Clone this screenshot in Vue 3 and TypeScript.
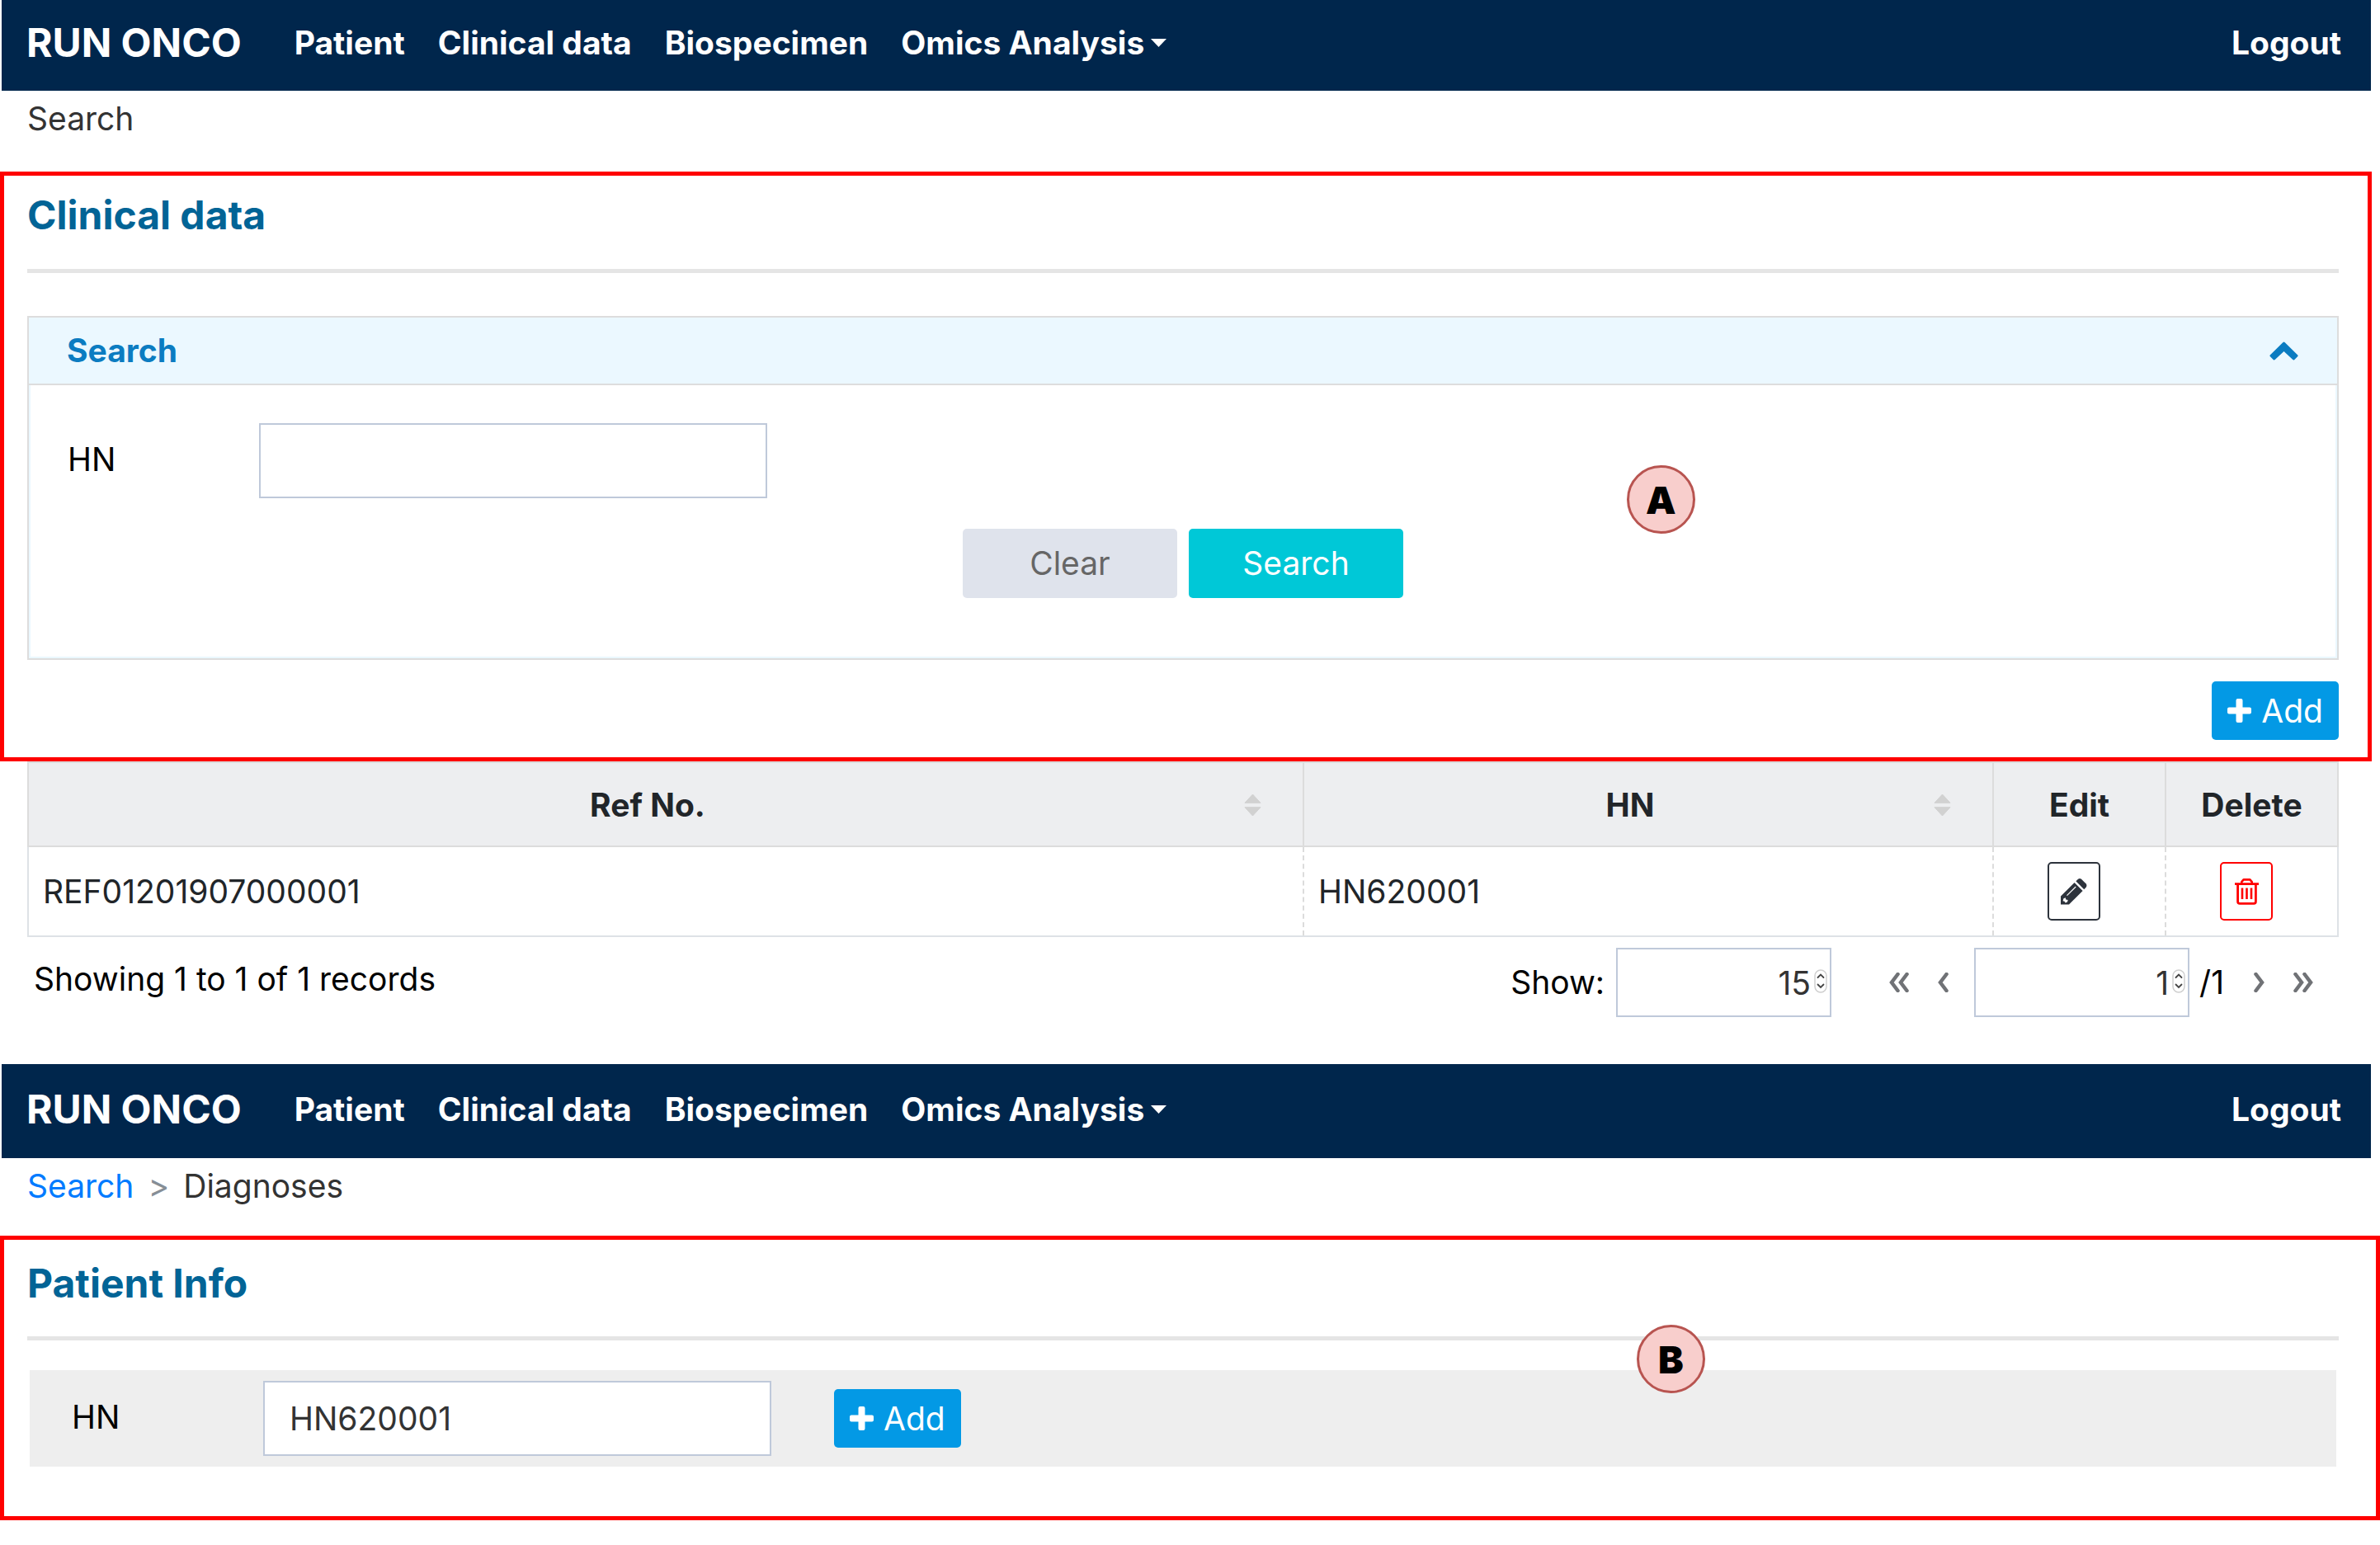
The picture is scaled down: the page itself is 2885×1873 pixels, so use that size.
<script setup lang="ts">
import { ref } from 'vue'

interface RecordRow {
  refNo: string
  hn: string
}

const navItems: string[] = ['Patient', 'Clinical data', 'Biospecimen']
const rows: RecordRow[] = [{ refNo: 'REF01201907000001', hn: 'HN620001' }]

const searchHn = ref('')
const patientHn = ref('HN620001')
const pageSize = ref('15')
const pageNo = ref('1')
</script>

<template>
  <main class="page">
    <nav class="navbar">
      <a class="brand" href="#">RUN ONCO</a>
      <a v-for="item in navItems" :key="item" class="nav-link" href="#">{{ item }}</a>
      <button class="nav-link nav-menu" type="button">
        Omics Analysis
        <svg width="19" height="10" viewBox="0 0 19 10"><path d="M0 0H19L9.5 10Z" fill="#fff" /></svg>
      </button>
      <a class="nav-link logout" href="#">Logout</a>
    </nav>
    <div class="breadcrumb"><span>Search</span></div>

    <section class="region region-search">
      <h1 class="title">Clinical data</h1>
      <hr class="rule" />
      <form class="panel" @submit.prevent>
        <header class="panel-head">
          <h2>Search</h2>
          <button class="icon-button" type="button" aria-label="Collapse">
            <svg width="35" height="23" viewBox="0 0 35 23">
              <path d="M17.5 2L33 17.2L29.3 21L17.5 9.9L5.7 21L2 17.2Z" fill="#0b7cc1" stroke="#0b7cc1" stroke-width="3" stroke-linejoin="round" />
            </svg>
          </button>
        </header>
        <div class="panel-body">
          <div class="field">
            <label for="search-hn">HN</label>
            <input id="search-hn" v-model="searchHn" class="text-input" type="text" />
          </div>
          <div class="actions">
            <button class="action clear" type="reset">Clear</button>
            <button class="action search" type="submit">Search</button>
          </div>
        </div>
      </form>
      <div class="add-row">
        <button class="add" type="button">
          <svg width="29" height="29" viewBox="0 0 29 29">
            <path d="M12.5 2H16.5V12.5H27V16.5H16.5V27H12.5V16.5H2V12.5H12.5Z" fill="#fff" stroke="#fff" stroke-width="4" stroke-linejoin="round" />
          </svg>
          Add
        </button>
      </div>
      <span class="marker marker-a">A</span>
    </section>

    <table class="records">
      <colgroup>
        <col />
        <col class="col-hn" />
        <col class="col-tool" />
        <col class="col-tool" />
      </colgroup>
      <thead>
        <tr>
          <th v-for="head in ['Ref No.', 'HN']" :key="head" scope="col">
            <div class="sortable">
              <span>{{ head }}</span>
              <svg width="21" height="28" viewBox="0 0 21 28">
                <path d="M10.5 1L20 11.3H1ZM10.5 27L20 16.7H1Z" fill="#d1d1d1" stroke="#d1d1d1" stroke-linejoin="round" />
              </svg>
            </div>
          </th>
          <th scope="col">Edit</th>
          <th scope="col">Delete</th>
        </tr>
      </thead>
      <tbody>
        <tr v-for="row in rows" :key="row.refNo">
          <td>{{ row.refNo }}</td>
          <td>{{ row.hn }}</td>
          <td class="tool">
            <button class="square edit" type="button" aria-label="Edit">
              <svg width="32" height="32" viewBox="0 0 32 32">
                <path d="M0 31.5V21.5L16.6 5L26.6 15L10 31.5Z" fill="#2d333c" />
                <path d="M18.4 3.3L21 .8Q23 -.6 25 .8L30.8 6.6Q32 8.4 30.8 10.4L28.3 13.2Z" fill="#2d333c" />
                <path d="M7.5 20.6L18.2 10" stroke="#fff" stroke-width="1.2" />
                <path d="M3.4 24.2L5.8 23.2L6.2 25.4L8.7 26L8 28.6L5.6 29.6L4.6 27.8L2.6 27.2Z" fill="#fff" />
              </svg>
            </button>
          </td>
          <td class="tool">
            <button class="square delete" type="button" aria-label="Delete">
              <svg width="29" height="32" viewBox="0 0 29 32" fill="none" stroke="#f00">
                <path d="M0 6.6H29" stroke-width="2.8" />
                <path d="M8.3 6V4.2L10.6 1.4H18.4L20.7 4.2V6" stroke-width="2.6" stroke-linejoin="round" />
                <path d="M3.6 7V28Q3.6 30.4 6 30.4H23Q25.4 30.4 25.4 28V7" stroke-width="2.8" />
                <path d="M9 11.5V25M14.5 11.5V25M20 11.5V25" stroke-width="2.6" />
              </svg>
            </button>
          </td>
        </tr>
      </tbody>
    </table>

    <div class="pager">
      <p class="summary">Showing 1 to 1 of 1 records</p>
      <label for="page-size">Show:</label>
      <div class="number">
        <input id="page-size" v-model="pageSize" type="text" inputmode="numeric" />
        <svg class="spinner" width="16" height="30" viewBox="0 0 16 30" fill="none">
          <rect x="1" y="1" width="14" height="27" rx="7" fill="#fff" stroke="#cfcfcf" stroke-width="1.5" />
          <path d="M4.5 10L8 6.6L11.5 10M4.5 18.5L8 22L11.5 18.5" stroke="#444" stroke-width="1.8" />
        </svg>
      </div>
      <button class="icon-button first" type="button" aria-label="First page">
        <svg width="24" height="24" viewBox="0 0 24 24"><path d="M10.5 2L3 12L10.5 22M21.5 2L14 12L21.5 22" /></svg>
      </button>
      <button class="icon-button prev" type="button" aria-label="Previous page">
        <svg width="13" height="24" viewBox="0 0 13 24"><path d="M10.5 2L3 12L10.5 22" /></svg>
      </button>
      <div class="number">
        <input id="page-no" v-model="pageNo" type="text" inputmode="numeric" aria-label="Page" />
        <svg class="spinner" width="16" height="30" viewBox="0 0 16 30" fill="none">
          <rect x="1" y="1" width="14" height="27" rx="7" fill="#fff" stroke="#cfcfcf" stroke-width="1.5" />
          <path d="M4.5 10L8 6.6L11.5 10M4.5 18.5L8 22L11.5 18.5" stroke="#444" stroke-width="1.8" />
        </svg>
      </div>
      <span class="total">/1</span>
      <button class="icon-button next" type="button" aria-label="Next page">
        <svg width="13" height="24" viewBox="0 0 13 24"><path d="M2.5 2L10 12L2.5 22" /></svg>
      </button>
      <button class="icon-button last" type="button" aria-label="Last page">
        <svg width="24" height="24" viewBox="0 0 24 24"><path d="M2.5 2L10 12L2.5 22M13.5 2L21 12L13.5 22" /></svg>
      </button>
    </div>

    <nav class="navbar navbar-second">
      <a class="brand" href="#">RUN ONCO</a>
      <a v-for="item in navItems" :key="item" class="nav-link" href="#">{{ item }}</a>
      <button class="nav-link nav-menu" type="button">
        Omics Analysis
        <svg width="19" height="10" viewBox="0 0 19 10"><path d="M0 0H19L9.5 10Z" fill="#fff" /></svg>
      </button>
      <a class="nav-link logout" href="#">Logout</a>
    </nav>
    <div class="breadcrumb breadcrumb-second">
      <a href="#">Search</a><span class="sep">&gt;</span><span>Diagnoses</span>
    </div>

    <section class="region region-patient">
      <h1 class="title">Patient Info</h1>
      <hr class="rule" />
      <div class="field patient-row">
        <label for="patient-hn">HN</label>
        <input id="patient-hn" v-model="patientHn" class="text-input" type="text" />
        <button class="add" type="button">
          <svg width="29" height="29" viewBox="0 0 29 29">
            <path d="M12.5 2H16.5V12.5H27V16.5H16.5V27H12.5V16.5H2V12.5H12.5Z" fill="#fff" stroke="#fff" stroke-width="4" stroke-linejoin="round" />
          </svg>
          Add
        </button>
      </div>
      <span class="marker marker-b">B</span>
    </section>
  </main>
</template>

<style>
body {
  background: #fff;
}
</style>

<style scoped>
.page,
.page * {
  box-sizing: border-box;
}
.page {
  font-family: Inter, "Liberation Sans", sans-serif;
  font-size: 39px;
  line-height: 46px;
  color: #000;
  padding-bottom: 30px;
}
button,
input {
  font: inherit;
  margin: 0;
}
button {
  cursor: pointer;
}
a {
  text-decoration: none;
}

.navbar {
  display: flex;
  align-items: center;
  gap: 40px;
  height: 110px;
  margin: 0 11px 0 2px;
  padding: 0 36px 6px 30px;
  background: #00264c;
}
.navbar-second {
  height: 114px;
  padding-bottom: 4px;
}
.brand {
  margin-right: 24px;
  font-size: 48px;
  font-weight: 700;
  color: #fff;
  white-space: nowrap;
}
.nav-link {
  padding: 0;
  border: 0;
  background: none;
  font-weight: 700;
  color: #fff;
  white-space: nowrap;
}
.nav-menu {
  display: flex;
  align-items: center;
  gap: 8px;
}
.logout {
  margin-left: auto;
}

.breadcrumb {
  padding: 11px 33px 41px;
  color: #333;
}
.breadcrumb-second {
  padding-bottom: 37px;
}
.breadcrumb a {
  color: #007bff;
}
.sep {
  margin: 0 17px;
  color: #868e96;
}

.region {
  position: relative;
  border: 5px solid #f00;
}
.region-search {
  margin-right: 10px;
  padding: 19px 35px 21px 28px;
}
.region-patient {
  padding: 24px 45px 60px 28px;
}
.title {
  margin: 0;
  font-size: 48px;
  line-height: 58px;
  font-weight: 700;
  color: #026496;
}
.rule {
  height: 5px;
  margin: 36px 0 0;
  border: 0;
  background: #e5e5e5;
}

.panel {
  margin-top: 52px;
  border: 2px solid #ddd;
}
.panel-head {
  display: flex;
  align-items: center;
  justify-content: space-between;
  height: 82px;
  padding: 0 47px 0 46px;
  border-bottom: 2px solid #ddd;
  background: #ebf8ff;
}
.panel-head h2 {
  margin: 0;
  font-size: 39px;
  font-weight: 700;
  color: #0b7cc1;
}
.icon-button {
  display: flex;
  padding: 0;
  border: 0;
  background: none;
}
.panel-body {
  padding: 46px 45px 71px;
  border: 2px solid #ebf8ff;
  border-top: 0;
}
.field {
  display: flex;
  align-items: center;
}
.field label {
  width: 232px;
  padding-bottom: 3px;
}
.text-input {
  width: 616px;
  height: 91px;
  padding: 0 30px;
  border: 2px solid #bfc9da;
  outline: 0;
  background: #fff;
  color: #333;
}
.actions {
  display: flex;
  justify-content: center;
  gap: 14px;
  margin-top: 37px;
}
.action {
  width: 260px;
  height: 84px;
  border: 0;
  border-radius: 5px;
}
.clear {
  background: #dfe3ec;
  color: #666;
}
.search {
  background: #00c8d7;
  color: #fff;
}
.add-row {
  display: flex;
  justify-content: flex-end;
  margin-top: 26px;
}
.add {
  display: flex;
  align-items: center;
  gap: 12px;
  height: 71px;
  padding: 0 19px;
  border: 0;
  border-radius: 5px;
  background: #0399e5;
  color: #fff;
}

.marker {
  position: absolute;
  display: flex;
  align-items: center;
  justify-content: center;
  width: 83px;
  height: 83px;
  border: 3px solid #b85450;
  border-radius: 50%;
  background: #f8cecc;
  font-size: 46px;
  font-weight: 900;
}
.marker-a {
  left: calc(69% - 10px);
  top: 351px;
}
.marker-b {
  left: calc(69% - 5px);
  top: 103px;
}

.records {
  width: calc(100% - 83px);
  margin-left: 33px;
  border: 2px solid #dee2e6;
  border-collapse: collapse;
  table-layout: fixed;
  color: #212529;
}
.col-hn {
  width: 836px;
}
.col-tool {
  width: 209px;
}
.records th {
  height: 102px;
  padding: 2px 0 0;
  border: 2px solid #dcdcdc;
  background: #edeef0;
  font-weight: 700;
}
.sortable {
  display: flex;
  align-items: center;
  padding: 0 50px 0 27px;
}
.sortable span {
  flex: 1;
}
.records td {
  height: 109px;
  padding: 0 17px;
  border-left: 2px dashed #dcdcdc;
}
.records td:first-child {
  border-left: 2px solid #dee2e6;
}
.records td.tool {
  padding: 0 13px 0 0;
}
.square {
  display: flex;
  align-items: center;
  justify-content: center;
  width: 64px;
  height: 71px;
  margin: 0 auto;
  padding: 0;
  border: 2px solid;
  border-radius: 5px;
  background: #fff;
}
.edit {
  border-color: #2d333c;
}
.delete {
  border-color: #f00;
}

.pager {
  display: flex;
  align-items: center;
  padding: 13px 81px 57px 41px;
}
.summary {
  margin: 0 auto 0 0;
  padding-bottom: 8px;
}
.number {
  position: relative;
  margin-left: 14px;
}
.number input {
  display: block;
  width: 261px;
  height: 84px;
  padding: 0 23px 0 0;
  border: 2px solid #bfc9da;
  outline: 0;
  background: #fff;
  color: #333;
  text-align: right;
}
.spinner {
  position: absolute;
  top: 26px;
  right: 5px;
}
.pager path {
  stroke-linecap: round;
}
.pager .icon-button path {
  fill: none;
  stroke: #707276;
  stroke-width: 4.5;
}
.first {
  margin-left: 70px;
}
.prev {
  margin: 0 17px 0 35px;
}
.total {
  margin-left: 12px;
}
.next {
  margin: 0 35px 0 36px;
}

.patient-row {
  height: 117px;
  margin: 36px 3px 0;
  padding-left: 51px;
  background: #eee;
}
.region-patient .rule {
  margin-top: 35px;
}
.patient-row .add {
  margin-left: 76px;
}
</style>
